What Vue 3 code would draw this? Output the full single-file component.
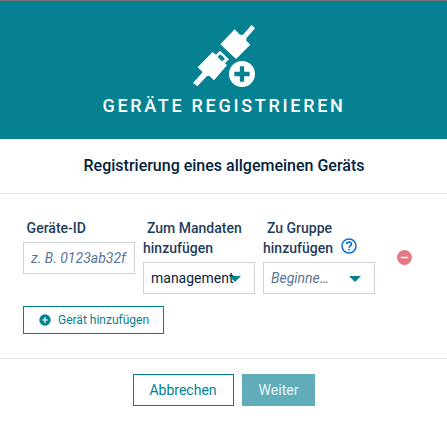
<script setup>
import { ref } from 'vue'

const deviceId = ref('')
const tenant = ref('management')
const group = ref('')
</script>

<template>
  <div class="dialog">
    <header class="banner">
      <svg class="plug" viewBox="0 0 270 240" aria-hidden="true">
        <g fill="#fff">
          <path d="M164 43 L180 59 L189 59 L215 30 L225 40 L199 70 L199 77 L211 89 L168 132 L121 88 Z" />
          <path fill-rule="evenodd" d="M98 111 L108 119 L120 107 L147 133 L135 145 L141 151 L102 196 L88 182 L80 184 L52 214 L39 204 L66 174 L67 170 L53 157 Z M121 118 L113 126 L126 139 L135 131 Z" />
          <circle cx="186" cy="177" r="39" />
        </g>
        <path d="M186 154 V200 M163 177 H209" stroke="#068191" stroke-width="13" />
      </svg>
      <h1>GERÄTE REGISTRIEREN</h1>
    </header>
    <h2>Registrierung eines allgemeinen Geräts</h2>
    <section class="content">
      <div class="fields">
        <div class="field">
          <label>Geräte-ID</label>
          <input v-model="deviceId" class="box" placeholder="z. B. 0123ab32f" />
        </div>
        <div class="field">
          <label>Zum Mandaten hinzufügen</label>
          <div class="box select">
            <span>{{ tenant }}</span>
            <svg class="arrow" viewBox="0 0 12 6"><path d="M0 0H12L6 6Z" fill="#008390" /></svg>
          </div>
        </div>
        <div class="field">
          <label>Zu Gruppe hinzufügen
            <svg class="help" viewBox="0 0 16 16">
              <circle cx="8" cy="8" r="7" fill="none" stroke="#0b6cce" stroke-width="1.5" />
              <path d="M5.6 6.3C5.6 3.3 10.4 3.4 10.4 6.3C10.4 8 8 8.1 8 9.8" fill="none" stroke="#0b6cce" stroke-width="1.6" />
              <path d="M7.2 10.9h1.6v1.6H7.2z" fill="#0b6cce" />
            </svg>
          </label>
          <div class="box select">
            <span :class="{ hint: !group }">{{ group || 'Beginne…' }}</span>
            <svg class="arrow" viewBox="0 0 12 6"><path d="M0 0H12L6 6Z" fill="#008390" /></svg>
          </div>
        </div>
        <svg class="remove" viewBox="0 0 15 15">
          <circle cx="7.5" cy="7.5" r="7.4" fill="#e37783" />
          <path d="M3.8 7.5H11.2" stroke="#fff" stroke-width="1.5" />
        </svg>
      </div>
      <button class="add">
        <svg viewBox="0 0 12 12">
          <circle cx="6" cy="6" r="5.7" fill="#008390" />
          <path d="M6 3V9M3 6H9" stroke="#fff" stroke-width="1.2" />
        </svg>
        <span>Gerät hinzufügen</span>
      </button>
    </section>
    <footer>
      <button class="cancel">Abbrechen</button>
      <button class="next" disabled>Weiter</button>
    </footer>
  </div>
</template>

<style>
body {
  background: #fff;
}
</style>

<style scoped>
.dialog {
  box-sizing: border-box;
  height: 422px;
  border-top: 1px solid #6d7375;
  font-family: Roboto, sans-serif;
  font-size: 14px;
  line-height: 20px;
  color: #0a2540;
  overflow: hidden;
}
.banner {
  height: 138px;
  background: #068191;
  display: flex;
  flex-direction: column;
  align-items: center;
  box-sizing: border-box;
  padding: 14px 0 0 1px;
}
.plug {
  width: 90px;
  height: 80px;
  flex: none;
  margin-left: 2px;
}
h1 {
  margin: 0;
  font-size: 18px;
  line-height: 22px;
  font-weight: 500;
  letter-spacing: 2.7px;
  color: #fff;
}
h2 {
  box-sizing: border-box;
  margin: 0;
  padding-left: 1px;
  height: 55px;
  line-height: 54px;
  border-bottom: 1px solid #dfe4ea;
  text-align: center;
  font-size: 16px;
  font-weight: 500;
  color: #03223d;
}
.content {
  box-sizing: border-box;
  height: 165px;
  padding: 24px 23px 0;
  border-bottom: 1px solid #e2e2e2;
}
.fields {
  display: flex;
  align-items: flex-start;
  gap: 8px;
  height: 88px;
}
.field {
  width: 112px;
}
label {
  display: block;
  font-weight: 500;
  color: #1f3d5c;
  text-indent: 4px;
}
.field:first-child label {
  text-indent: 3.6px;
}
.box {
  box-sizing: border-box;
  width: 112px;
  height: 32px;
  margin: 4px 0 0;
  padding: 0 7px;
  border: 1px solid #ccd3de;
  border-radius: 0;
  background: #fff;
  font: 14px/30px Roboto, sans-serif;
  color: #0a2540;
  display: block;
  outline: none;
}
.box::placeholder {
  color: #577696;
  opacity: 1;
  font-style: italic;
}
.select {
  display: flex;
  align-items: center;
  justify-content: space-between;
  padding: 0 13.5px 0 7px;
}
.select span {
  min-width: 0;
  white-space: nowrap;
}
.hint {
  color: #577696;
  font-style: italic;
}
.arrow {
  width: 12px;
  height: 6px;
  flex: none;
  margin-top: 2px;
}
.help {
  width: 16px;
  height: 16px;
  margin-left: 5px;
  vertical-align: -1px;
  margin-top: -1px;
}
.remove {
  width: 15px;
  height: 15px;
  margin: 32px 0 0 14px;
}
button {
  box-sizing: border-box;
  border: 1px solid #008390;
  background: #fff;
  color: #008390;
  padding: 0;
  font: 14px/30px Roboto, sans-serif;
}
.add {
  display: flex;
  align-items: center;
  width: 141px;
  height: 28px;
  padding-left: 15px;
  font-size: 12px;
  line-height: 26px;
}
.add svg {
  width: 12px;
  height: 12px;
  margin-right: 7px;
}
footer {
  display: flex;
  justify-content: center;
  gap: 8px;
  padding-top: 15px;
}
.cancel {
  width: 101px;
  height: 32px;
}
.next {
  width: 73px;
  height: 32px;
  padding-left: 1px;
  border-color: #60adb9;
  background: #60adb9;
  color: #e9f5f7;
}
</style>
